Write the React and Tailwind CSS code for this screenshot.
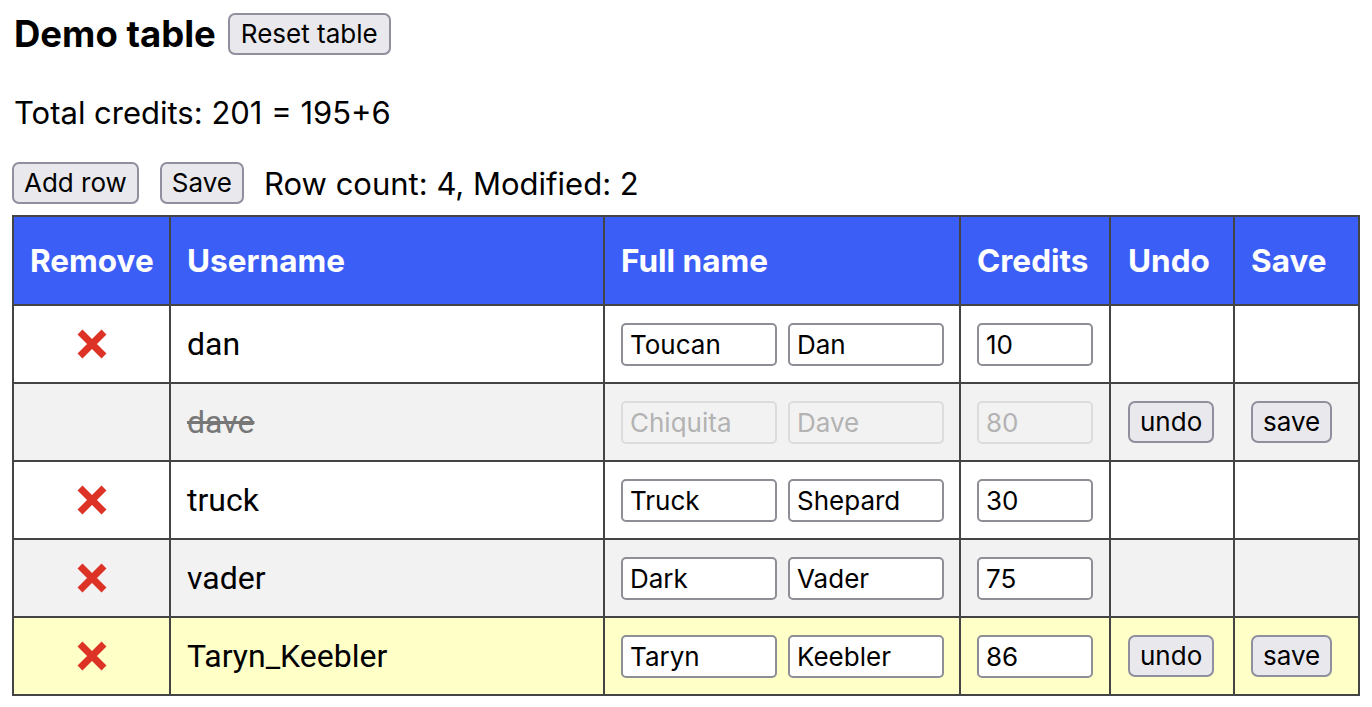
const rows = [
  { user: "dan", first: "Toucan", last: "Dan", credits: "10", bg: "bg-white" },
  { user: "dave", first: "Chiquita", last: "Dave", credits: "80", bg: "bg-[#f2f2f2]", removed: true, modified: true },
  { user: "truck", first: "Truck", last: "Shepard", credits: "30", bg: "bg-white" },
  { user: "vader", first: "Dark", last: "Vader", credits: "75", bg: "bg-[#f2f2f2]" },
  { user: "Taryn_Keebler", first: "Taryn", last: "Keebler", credits: "86", bg: "bg-[#ffffc8]", modified: true },
];

const sans = "font-['Inter','Liberation_Sans',sans-serif]";
const btn =
  "h-[42px] px-[10px] rounded-[7px] border-2 border-[#8f8f9d] bg-[#e9e9ed] text-[26px] leading-none text-black " + sans;

function RemoveIcon() {
  return (
    <svg width="32" height="32" viewBox="0 0 32 32" className="inline-block">
      <path d="M4 4 L28 28 M28 4 L4 28" stroke="#dc3326" strokeWidth="7" strokeLinecap="butt" />
    </svg>
  );
}

function Field({ value, width, disabled }) {
  return (
    <input
      readOnly
      value={value}
      disabled={disabled}
      className={
        "h-[43px] px-[7px] rounded-[5px] border-2 text-[26px] outline-none " +
        sans +
        (disabled
          ? " border-[#dcdcdc] bg-transparent text-[#b3b3b3]"
          : " border-[#8e8e96] bg-white text-black")
      }
      style={{ width }}
    />
  );
}

const cell = "border-2 border-[#444] align-middle";

export default function App() {
  return (
    <div className={"pl-[12px] pt-[13px] text-black " + sans}>
      <div className="flex items-center gap-[12px] h-[42px]">
        <h1 className="text-[36.5px] font-bold leading-none ml-[2px]">Demo table</h1>
        <button className={btn + " px-[11px]"}>Reset table</button>
      </div>
      <p className="mt-[40px] ml-[2px] text-[31px] leading-[36px]">Total credits: 201 = 195+6</p>
      <div className="mt-[31px] flex items-center h-[42px]">
        <button className={btn}>Add row</button>
        <button className={btn + " ml-[21px]"}>Save</button>
        <span className="ml-[20px] text-[31px] leading-none">Row count: 4, Modified: 2</span>
      </div>
      <table className="mt-[11px] w-[1346px] table-fixed border-collapse border-2 border-[#444]">
        <colgroup>
          <col style={{ width: 157 }} />
          <col style={{ width: 434 }} />
          <col style={{ width: 356 }} />
          <col style={{ width: 150 }} />
          <col style={{ width: 124 }} />
          <col style={{ width: 125 }} />
        </colgroup>
        <thead>
          <tr className="h-[89px] bg-[#3b5ef6] text-white text-[31.5px] font-bold text-left">
            <th className={cell + " px-[16px] text-center"}>Remove</th>
            <th className={cell + " px-[16px]"}>Username</th>
            <th className={cell + " px-[16px]"}>Full name</th>
            <th className={cell + " px-[16px]"}>Credits</th>
            <th className={cell + " px-[17px]"}>Undo</th>
            <th className={cell + " px-[16px]"}>Save</th>
          </tr>
        </thead>
        <tbody>
          {rows.map((r) => (
            <tr key={r.user} className={"h-[78px] " + r.bg}>
              <td className={cell + " text-center"}>{!r.removed && <RemoveIcon />}</td>
              <td
                className={
                  cell +
                  " px-[16px] text-[32px] font-['Roboto','Liberation_Sans',sans-serif] " +
                  (r.removed ? "line-through text-[#777]" : "text-black")
                }
              >
                {r.user}
              </td>
              <td className={cell + " px-[16px]"}>
                <div className="flex gap-[11px]">
                  <Field value={r.first} width={156} disabled={r.removed} />
                  <Field value={r.last} width={156} disabled={r.removed} />
                </div>
              </td>
              <td className={cell + " px-[16px]"}>
                <Field value={r.credits} width={116} disabled={r.removed} />
              </td>
              <td className={cell + " px-[17px]"}>
                {r.modified && <button className={btn}>undo</button>}
              </td>
              <td className={cell + " px-[16px]"}>
                {r.modified && <button className={btn}>save</button>}
              </td>
            </tr>
          ))}
        </tbody>
      </table>
    </div>
  );
}
